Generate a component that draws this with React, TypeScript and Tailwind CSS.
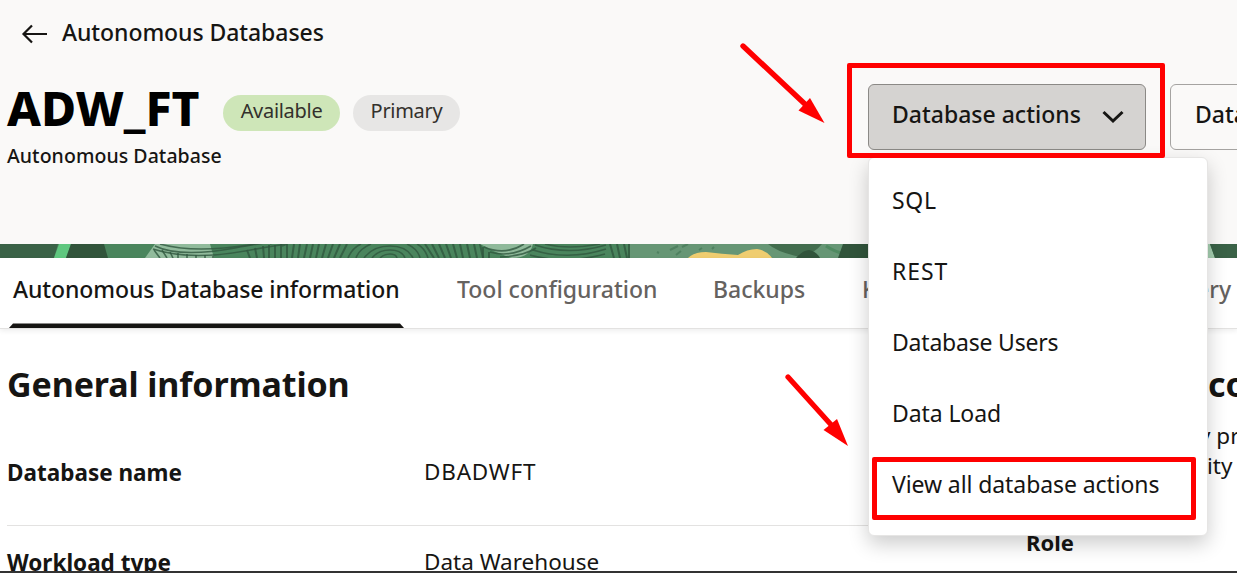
import type { ReactNode } from "react";

const menuItems = [
  { label: "SQL", spacing: "tracking-[0.7px]" },
  { label: "REST", spacing: "tracking-[0.9px]" },
  { label: "Database Users", spacing: "tracking-[-0.2px]" },
  { label: "Data Load", spacing: "tracking-[-0.1px]" },
  { label: "View all database actions", spacing: "tracking-[-0.09px]" },
];

function Badge({ className, children }: { className: string; children: ReactNode }) {
  return (
    <span className={`flex h-9 items-center justify-center rounded-full pb-1 text-[20px] leading-none tracking-[-0.3px] text-[#33302c] ${className}`}>
      {children}
    </span>
  );
}

function BannerArt() {
  return (
    <svg className="block h-[14px] w-full shrink-0" viewBox="0 0 1237 14" preserveAspectRatio="none">
      <rect width="1237" height="14" fill="#4a855d" />
      <path d="M0 0H58L54 14H0Z" fill="#3a6247" />
      <path d="M59 0H71L66 14H54Z" fill="#5fc77f" />
      <path d="M71 0H104L108 14H66Z" fill="#31543b" />
      <path d="M155 0H210L214 14H145Z" fill="#91bb9c" />
      <g fill="none" stroke="#2f573e" strokeOpacity="0.8" strokeWidth="1.6">
        <path d="M155 2Q180 14 235 4T270 0" />
        <path d="M160 0Q195 10 255 0" />
        <path d="M153 5Q190 17 245 7T282 2" />
        <path d="M154 6l6 8M162 6l5 8M170 8l3 6M178 9v5M187 10v4M196 11v3M205 11v3M213 12v2" />
        <path d="M247 6l3 8M255 4l2 10M263 2l1 12M269 1v13M275 1v13M281 0v14M287 0v14M294 0l-2 14M300 0l-2 14M307 0l-3 14M313 0l-3 14M319 0l-3 14M326 0l-4 14M333 0l-5 14M340 0l-6 14M347 0l-7 14" strokeWidth="2" />
        <path d="M348 14Q352 4 361 0M356 14Q359 5 371 0M428 14Q425 4 417 0M420 14Q418 5 407 0" />
        <path d="M364 14Q373 2 390 2T413 14M372 14Q378 6 390 6T405 14M380 14Q384 10 390 10T397 14" />
        <path d="M425 0l9 14M432 0l7 14M439 0l6 14M446 0l5 14M453 0l4 14M460 0l3 14M467 0l3 14M474 0l3 14M480 0l3 14" strokeWidth="2" />
      </g>
      <path d="M480 0H533Q530 14 512 14Q496 9 480 0Z" fill="#8fb99a" />
      <g fill="none" stroke="#2f573e" strokeOpacity="0.8" strokeWidth="1.6">
        <path d="M484 3Q505 12 524 0M490 8Q510 14 531 2M500 13Q524 12 536 4" />
        <path d="M483 3v11M489 8v6" strokeWidth="2" />
        <path d="M535 1Q568 12 606 1M533 6Q568 17 606 5M530 11Q565 21 605 10M545 0Q568 6 600 0" />
        <path d="M610 0l4 14M617 0l3 14M624 0l3 14M629 0v14" strokeWidth="2" />
      </g>
      <path d="M630 0H878V14H630Z" fill="#669675" />
      <path d="M670 6l8-4M682 3l6-3M676 11l5-4M699 6l3-2M712 5l2-2M657 8l2 1" stroke="#4f8160" strokeWidth="2" />
      <path d="M688 14Q694 8 706 8Q722 10 738 11Q747 5 757 5Q766 6 772 14Z" fill="#efcd70" />
      <path d="M768 0H822Q814 10 800 13Q777 8 768 0Z" fill="#426d4e" />
      <path d="M796 14Q803 6 809 6Q816 7 820 14Z" fill="#31543b" />
      <path d="M826 2Q835 8 845 10" stroke="#4f8a61" strokeWidth="3" fill="none" />
      <path d="M843 0H880V14H838Z" fill="#31543b" />
      <path d="M1200 0H1210L1215 14H1200Z" fill="#a6cfb1" />
      <path d="M1210 0H1237V14H1215Z" fill="#3a6247" />
    </svg>
  );
}

export default function App() {
  return (
    <div className="relative flex h-[573px] w-[1237px] flex-col overflow-hidden bg-white font-['Noto_Sans',sans-serif] text-[#161513]">
      <header className="flex h-[244px] shrink-0 justify-between bg-[#faf9f8]">
        <div className="flex flex-col pl-[7px]">
          <a className="mt-4 flex h-8 items-center gap-[14px] pl-[14px] text-[23px] leading-8 font-medium tracking-[-0.07px]">
            <svg className="mt-1" width="27" height="20" viewBox="0 0 27 20" fill="none" stroke="#161513" strokeWidth="2.200">
              <path d="M26 10H2.500M11 1.500L2.500 10l8.500 8.500" />
            </svg>
            <span>Autonomous Databases</span>
          </a>
          <div className="mt-[30px] flex h-[60px] items-center">
            <h1 className="w-[216px] text-[48px] leading-[60px] font-extrabold whitespace-nowrap text-black">ADW_FT</h1>
            <div className="mt-2.5 flex gap-[13px]">
              <Badge className="w-[117px] bg-[#cee6b8]">Available</Badge>
              <Badge className="w-[107px] bg-[#e7e6e5]">Primary</Badge>
            </div>
          </div>
          <p className="mt-1 text-[19.500px] leading-7 font-medium tracking-[0.06px]">Autonomous Database</p>
        </div>
        <div className="flex w-[369px] shrink-0 gap-6 overflow-hidden pt-[84px] text-[23px] font-medium">
          <button className="flex h-[66px] w-[278px] shrink-0 items-center gap-[21px] rounded-md border border-[#8b8986] bg-[#d5d3d1] pb-1.5 pl-[23px]">
            <span className="whitespace-nowrap">Database actions</span>
            <svg className="mt-1.5" width="22" height="14" viewBox="0 0 22 14" fill="none" stroke="#161513" strokeWidth="3">
              <path d="M1.500 2L11 11L20.500 2" />
            </svg>
          </button>
          <button className="flex h-[66px] w-[278px] shrink-0 items-center rounded-md border border-[#a5a3a1] pb-1.5 pl-6">Database connection</button>
        </div>
      </header>

      <BannerArt />

      <nav className="flex h-[71px] shrink-0 border-b border-[#e3e2e1] pl-[9px] text-[23px] leading-8 font-medium text-[#65625f] shadow-[0_2px_5px_rgba(0,0,0,0.07)]">
        <div className="flex w-[395px] flex-col justify-between pt-[15px] text-[#161513]">
          <span className="pl-1 tracking-[-0.08px] whitespace-nowrap">Autonomous Database information</span>
          <svg className="block h-[5px] w-full" viewBox="0 0 395 5" preserveAspectRatio="none">
            <path d="M4 0.500H391L395 5H0Z" fill="#161513" />
          </svg>
        </div>
        <span className="w-[257px] pt-[15px] pl-[53px] whitespace-nowrap">Tool configuration</span>
        <span className="w-[149px] pt-[15px] pl-[52px]">Backups</span>
        <span className="w-[386px] pt-[15px] pl-[52px]">Key</span>
        <span className="pt-[15px]">ery</span>
      </nav>

      <main className="flex h-[242px] shrink-0 overflow-hidden">
        <section className="w-[1027px] shrink-0 pl-[7px]">
          <h2 className="mt-8 h-[46px] text-[34px] leading-[46px] font-bold tracking-[-0.12px]">General information</h2>
          <dl className="text-[22.500px]">
            <div className="mt-8 flex h-[87px] w-[980px] border-b border-[#e3e2e1] pt-[17px] leading-8">
              <dt className="w-[417px] pt-px font-bold">Database name</dt>
              <dd className="tracking-[0.8px]">DBADWFT</dd>
            </div>
            <div className="flex pt-5 leading-8">
              <dt className="w-[417px] pt-px font-bold">Workload type</dt>
              <dd>Data Warehouse</dd>
            </div>
          </dl>
        </section>
        <section className="w-[210px] shrink-0 overflow-hidden">
          <div className="w-[400px] pl-[181px]">
            <h2 className="mt-8 h-[46px] text-[34px] leading-[46px] font-bold">connection</h2>
            <p className="mt-[14px] -ml-[9px] text-[22.500px] leading-[30px]">
              y private
              <br />
              <span className="pl-2">ity</span>
            </p>
          </div>
          <p className="mt-[45px] -ml-px text-[22px] leading-8 font-bold">Role</p>
        </section>
      </main>
      <div className="h-[2px] shrink-0 bg-[#333333]" />

      <ul className="absolute top-[157px] left-[868px] h-[379px] w-[340px] rounded-md border border-[#e6e5e4] bg-white pt-[7px] text-[23px] shadow-[0_8px_20px_rgba(0,0,0,0.2)]">
        {menuItems.map(({ label, spacing }) => (
          <li key={label} className={`flex h-[71px] items-center pl-[23px] whitespace-nowrap ${spacing}`}>
            {label}
          </li>
        ))}
      </ul>

      <div className="absolute top-[63px] left-[847px] h-[95px] w-[318px] rounded-[2px] border-[5px] border-[#ff0000]" />
      <div className="absolute top-[457px] left-[872px] h-[63px] w-[324px] rounded-[2px] border-[5px] border-[#ff0000]" />
      <svg className="pointer-events-none absolute top-[43px] left-[740px] h-[82px] w-[86px]" viewBox="0 0 86 82" fill="#ff0000">
        <path d="M3 3L67 63" stroke="#ff0000" strokeWidth="5.400" strokeLinecap="round" />
        <path d="M70 55L84.500 80L58.500 67.500Z" />
      </svg>
      <svg className="pointer-events-none absolute top-[374px] left-[785px] h-[73px] w-[64px]" viewBox="0 0 64 73" fill="#ff0000">
        <path d="M3 3L49 54" stroke="#ff0000" strokeWidth="5.200" strokeLinecap="round" />
        <path d="M52 45L63 72L38.500 56Z" />
      </svg>
    </div>
  );
}
